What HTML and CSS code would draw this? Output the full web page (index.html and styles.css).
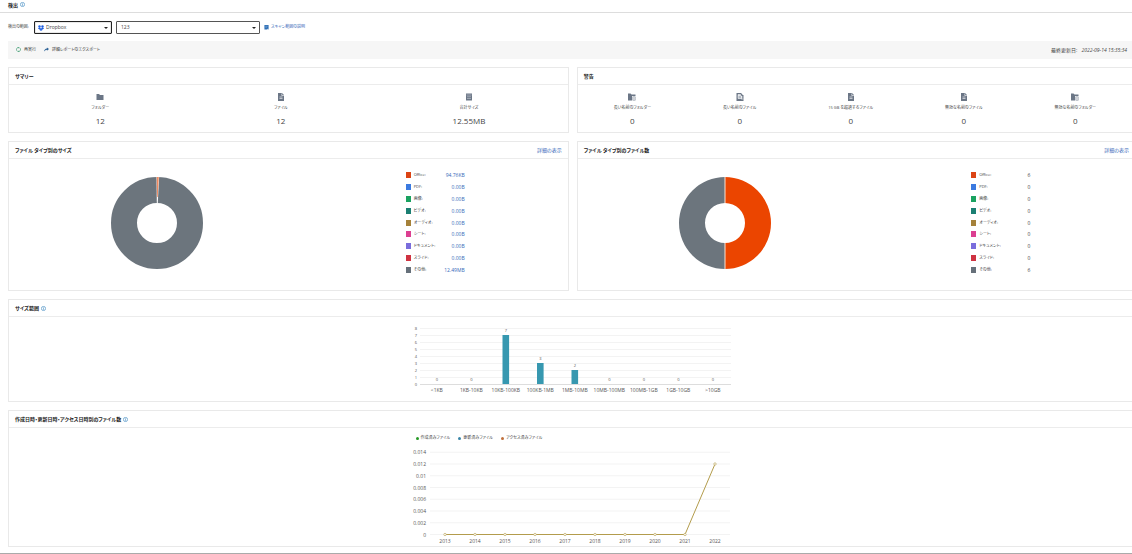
FILE: index.html
```html
<!DOCTYPE html>
<html lang="ja">
<head>
    <meta charset="UTF-8">
    <meta name="viewport" content="width=device-width, initial-scale=1.0">
    <title>検出</title>
    <link rel="stylesheet" href="styles.css">
</head>
<body>
    <!-- Shared icons -->
    <svg class="sprite" aria-hidden="true">
        <symbol id="icon-info" viewBox="0 0 10 10">
            <circle cx="5" cy="5" r="4.2" fill="none" stroke="#4a90c4" stroke-width="1.4"/>
            <path d="M5 4.3v3.2M5 2.4v1.1" stroke="#4a90c4" stroke-width="1.4"/>
        </symbol>
        <symbol id="icon-folder" viewBox="0 0 16 16">
            <path d="M1 2h5l2 2h7v10H1z" fill="#6b7686"/>
        </symbol>
        <symbol id="icon-file" viewBox="0 0 16 16">
            <path d="M2 0h8l4 4v12H2z" fill="#6b7686"/>
            <path d="M9.500 1v4H14M5 8h6M5 11h6" fill="none" stroke="#fff" stroke-width="1.200"/>
        </symbol>
        <symbol id="icon-long-file" viewBox="0 0 16 16">
            <path d="M1 0h9l3 3v1h2v12H1z" fill="#6b7686"/>
            <path d="M4 3h5v3h3v5H4zM10 12h5" fill="#dfe3e8" stroke="#fff"/>
            <path d="M5 8h5" stroke="#6b7686" stroke-width="1.500"/>
        </symbol>
        <symbol id="icon-long-folder" viewBox="0 0 16 16">
            <path d="M0 1h5l2 2h8v3H8v9H0z" fill="#6b7686"/>
            <path d="M9.500 7.500h5v7h-5zM11 10h2M11 12h2" fill="none" stroke="#6b7686"/>
        </symbol>
        <symbol id="icon-storage" viewBox="0 0 16 16">
            <path d="M2 1h12v14H2z" fill="#6b7686"/>
            <path d="M3 4h10M4 7.500h8M4 11h8" stroke="#d5dae0"/>
        </symbol>
    </svg>

    <header class="page-header">
        <h1>検出</h1>
        <svg class="icon-info"><use href="#icon-info"/></svg>
    </header>

    <main class="page">
        <form class="filters">
            <label for="source">検出の範囲:</label>
            <div class="select-wrap source">
                <svg class="dropbox" viewBox="0 0 12 11">
                    <path d="M3 0l3 2-3 2-3-2zM9 0l3 2-3 2-3-2zM3 4l3 2-3 2-3-2zM9 4l3 2-3 2-3-2zM6 7l3 2-3 2-3-2z" fill="#1f5fe0" stroke="#1f5fe0" stroke-width=".6"/>
                </svg>
                <select id="source"><option>Dropbox</option></select>
            </div>
            <div class="select-wrap scope">
                <select id="scope" aria-label="123"><option>123</option></select>
            </div>
            <a class="scope-link" href="#">
                <svg viewBox="0 0 12 12"><path d="M1 0h10v7l-4 4H1z" fill="#2f6fb5"/><path d="M3 3h6M3 5.500h4" stroke="#9cc4ea"/><path d="M8 9h4M10 7v4" stroke="#2f6fb5"/></svg>
                スキャン範囲の説明
            </a>
        </form>

        <div class="toolbar">
            <button type="button">
                <svg viewBox="0 0 12 12"><path d="M2 9A5 5 0 0 1 7 1.200M10 3A5 5 0 0 1 5 10.800" fill="none" stroke="#35986a" stroke-width="1.800"/><path d="M6 0l3 1.500L6.500 3.500zM6 12l-3-1.500 2.500-2z" fill="#35986a"/></svg>
                再実行
            </button>
            <button type="button">
                <svg viewBox="0 0 12 12"><path d="M7 1l5 4-5 4V6.500Q3 6.500 0 11 1 4 7 3.500z" fill="#2f6498"/></svg>
                詳細レポートのエクスポート
            </button>
            <p class="updated">最終更新日: <time>2022-09-14 15:35:34</time></p>
        </div>

        <div class="cards">
            <section class="card">
                <div class="card-header"><h2>サマリー</h2></div>
                <ul class="stats">
                    <li><svg><use href="#icon-folder"/></svg><span>フォルダー</span><strong>12</strong></li>
                    <li><svg><use href="#icon-file"/></svg><span>ファイル</span><strong>12</strong></li>
                    <li><svg><use href="#icon-storage"/></svg><span>合計サイズ</span><strong>12.55MB</strong></li>
                </ul>
            </section>

            <section class="card">
                <div class="card-header"><h2>警告</h2></div>
                <ul class="stats">
                    <li><svg><use href="#icon-long-folder"/></svg><span>長い名前のフォルダー</span><strong>0</strong></li>
                    <li><svg><use href="#icon-long-file"/></svg><span>長い名前のファイル</span><strong>0</strong></li>
                    <li><svg><use href="#icon-file"/></svg><span>15 GB を超過するファイル</span><strong>0</strong></li>
                    <li><svg><use href="#icon-file"/></svg><span>無効な名前のファイル</span><strong>0</strong></li>
                    <li><svg><use href="#icon-long-folder"/></svg><span>無効な名前のフォルダー</span><strong>0</strong></li>
                </ul>
            </section>

            <section class="card">
                <div class="card-header"><h2>ファイル タイプ別のサイズ</h2><a href="#">詳細の表示</a></div>
                <div class="breakdown">
                    <div class="donut">
                        <svg viewBox="0 0 92 92">
                            <circle cx="46" cy="46" r="33" fill="none" stroke="#6c757d" stroke-width="26"/>
                            <path d="M45.500 0h2.600L46.800 26h-1z" fill="#fff"/>
                            <path d="M45.800 0h2L46.700 20h-.7z" fill="#f08a60"/>
                        </svg>
                    </div>
                    <ul class="legend">
                        <li><i class="office"></i>Office:<a href="#">94.76KB</a></li>
                        <li><i class="pdf"></i>PDF:<a href="#">0.00B</a></li>
                        <li><i class="image"></i>画像:<a href="#">0.00B</a></li>
                        <li><i class="video"></i>ビデオ:<a href="#">0.00B</a></li>
                        <li><i class="audio"></i>オーディオ:<a href="#">0.00B</a></li>
                        <li><i class="sheet"></i>シート:<a href="#">0.00B</a></li>
                        <li><i class="document"></i>ドキュメント:<a href="#">0.00B</a></li>
                        <li><i class="slide"></i>スライド:<a href="#">0.00B</a></li>
                        <li><i class="other"></i>その他:<a href="#">12.49MB</a></li>
                    </ul>
                </div>
            </section>

            <section class="card">
                <div class="card-header"><h2>ファイル タイプ別のファイル数</h2><a href="#">詳細の表示</a></div>
                <div class="breakdown">
                    <div class="donut">
                        <svg viewBox="0 0 92 92">
                            <path d="M46 0a46 46 0 0 1 0 92V66a20 20 0 0 0 0-40z" fill="#eb4500"/>
                            <path d="M46 0a46 46 0 0 0 0 92V66a20 20 0 0 1 0-40z" fill="#6c757d"/>
                            <path d="M46 0v26M46 66v26" stroke="#fbe3d2"/>
                        </svg>
                    </div>
                    <ul class="legend">
                        <li><i class="office"></i>Office:<span>6</span></li>
                        <li><i class="pdf"></i>PDF:<span>0</span></li>
                        <li><i class="image"></i>画像:<span>0</span></li>
                        <li><i class="video"></i>ビデオ:<span>0</span></li>
                        <li><i class="audio"></i>オーディオ:<span>0</span></li>
                        <li><i class="sheet"></i>シート:<span>0</span></li>
                        <li><i class="document"></i>ドキュメント:<span>0</span></li>
                        <li><i class="slide"></i>スライド:<span>0</span></li>
                        <li><i class="other"></i>その他:<span>6</span></li>
                    </ul>
                </div>
            </section>

            <section class="card wide">
                <div class="card-header"><h2>サイズ範囲</h2><svg class="icon-info"><use href="#icon-info"/></svg></div>
                <svg class="chart" id="size-chart" viewBox="0 0 340 84"></svg>
            </section>

            <section class="card wide">
                <div class="card-header"><h2>作成日時・更新日時・アクセス日時別のファイル数</h2><svg class="icon-info"><use href="#icon-info"/></svg></div>
                <div class="chart-block">
                    <ul class="series">
                        <li class="created">作成済みファイル</li>
                        <li class="modified">更新済みファイル</li>
                        <li class="accessed">アクセス済みファイル</li>
                    </ul>
                    <svg class="chart" id="date-chart" viewBox="0 0 340 104"></svg>
                </div>
            </section>
        </div>
    </main>

    <script>
        (function() {
            function add(parent, name, attrs, text) {
                const el = document.createElementNS('http://www.w3.org/2000/svg', name);
                Object.keys(attrs).forEach(key => el.setAttribute(key, attrs[key]));
                if (text !== undefined) el.textContent = text;
                parent.appendChild(el);
            }

            // Files by size
            function drawSizeChart() {
                const svg = document.getElementById('size-chart');
                const labels = ['<1KB', '1KB-10KB', '10KB-100KB', '100KB-1MB', '1MB-10MB', '10MB-100MB', '100MB-1GB', '1GB-10GB', '>10GB'];
                const values = [0, 0, 7, 3, 2, 0, 0, 0, 0];
                const base = 67;

                for (let i = 0; i <= 8; i++) {
                    add(svg, 'line', { x1: 19, x2: 330, y1: base - i * 7 + .5, y2: base - i * 7 + .5, class: i ? 'grid' : 'axis' });
                    add(svg, 'text', { x: 16, y: base - i * 7 + 2, class: 'small end' }, i);
                }
                values.forEach((value, i) => {
                    const x = 35.8 + i * 34.5;
                    if (value) {
                        add(svg, 'rect', { x: x - 3.3, y: base - value * 7, width: 6.6, height: value * 7, class: 'bar' });
                    }
                    add(svg, 'text', { x: x, y: base - value * 7 - 3, class: 'small' }, value);
                    add(svg, 'text', { x: x, y: base + 8 }, labels[i]);
                });
            }

            // Files by date
            function drawDateChart() {
                const svg = document.getElementById('date-chart');
                const ticks = ['0', '0.002', '0.004', '0.006', '0.008', '0.01', '0.012', '0.014'];
                const values = [0, 0, 0, 0, 0, 0, 0, 0, 0, 0.012];
                const base = 92.5;
                const y = value => base - value / 0.002 * 11.75;

                ticks.forEach(tick => {
                    add(svg, 'line', { x1: 29, x2: 329, y1: y(tick), y2: y(tick), class: 'grid' });
                    add(svg, 'text', { x: 25, y: y(tick) + 2, class: 'end' }, tick);
                });
                const points = values.map((value, i) => [44 + i * 30, y(value)]);
                add(svg, 'polyline', { points: points.join(' '), class: 'line' });
                points.forEach((point, i) => {
                    add(svg, 'circle', { cx: point[0], cy: point[1], r: 1.2, class: 'point' });
                    add(svg, 'text', { x: point[0], y: 101 }, 2013 + i);
                });
            }

            drawSizeChart();
            drawDateChart();
        })();
    </script>
</body>
</html>
```
FILE: styles.css
```css
* {
    box-sizing: border-box;
}

body {
    margin: 0;
    background: #fff;
    color: #444;
    font-family: "Open Sans", "Noto Sans CJK JP", sans-serif;
    font-size: 5px;
    line-height: 8px;
    font-feature-settings: "palt";
    border-bottom: 1px solid #aaa;
}

h1,
h2,
p,
ul {
    margin: 0;
    padding: 0;
    list-style: none;
}

h1,
h2 {
    color: #222;
    font-size: 5px;
    font-weight: 700;
}

a {
    color: #3568b8;
    text-decoration: none;
}

.sprite {
    display: none;
}

.icon-info {
    width: 5px;
    height: 5px;
}

.page-header {
    display: flex;
    align-items: center;
    gap: 2px;
    height: 13px;
    padding: 0 8px 3px;
    border-bottom: 1px solid #ddd;
}

.page {
    padding: 7px 0 6px 8px;
}

/* Filters */
.filters {
    display: flex;
    align-items: center;
    height: 14px;
}

.filters label {
    width: 26px;
    font-size: 4px;
    white-space: nowrap;
}

.select-wrap {
    position: relative;
    height: 13px;
}

.select-wrap::after {
    content: "";
    position: absolute;
    right: 4px;
    top: 6px;
    border: 2px solid transparent;
    border-top-color: #222;
    border-bottom: 0;
}

.select-wrap select {
    display: block;
    width: 100%;
    height: 100%;
    padding: 0 4px;
    border: 1px solid #555;
    border-radius: 1px;
    background: #fff;
    color: #444;
    font: inherit;
    appearance: none;
}

.source {
    width: 78px;
    margin-right: 4px;
}

.source select {
    padding-left: 11px;
    border-color: #222;
    box-shadow: inset 0 0 1px #222;
}

.dropbox {
    position: absolute;
    left: 4px;
    top: 4px;
    width: 6px;
    height: 6px;
}

.scope {
    width: 144px;
    margin-right: 4px;
}

.scope-link {
    display: flex;
    align-items: center;
    gap: 2px;
    font-size: 4px;
}

.scope-link svg,
.toolbar button svg {
    width: 5px;
    height: 5px;
}

/* Toolbar */
.toolbar {
    display: flex;
    align-items: center;
    gap: 8px;
    height: 18px;
    margin-top: 7px;
    padding: 0 5px 1px 8px;
    background: #f6f6f6;
}

.toolbar button {
    display: flex;
    align-items: center;
    gap: 3px;
    padding: 0;
    border: 0;
    background: none;
    color: #333;
    font: inherit;
    font-size: 4px;
    font-feature-settings: inherit;
    cursor: pointer;
}

.updated {
    margin-left: auto;
}

.updated time {
    margin-left: 3px;
    font-style: italic;
}

/* Cards */
.cards {
    display: grid;
    grid-template-columns: 101fr 100fr;
    gap: 8px;
    margin-top: 8px;
}

.card {
    border: 1px solid #e9e9e9;
}

.card:nth-child(even),
.card.wide {
    border-right: 0;
}

.card.wide {
    grid-column: 1 / -1;
}

.card-header {
    display: flex;
    align-items: center;
    gap: 2px;
    height: 17px;
    padding: 0 6px;
    border-bottom: 1px solid #ececec;
}

.card-header a {
    margin-left: auto;
}

.card:nth-child(even) .card-header a {
    margin-right: -3px;
}

.stats {
    display: flex;
    justify-content: space-around;
    padding: 8px 0 5px;
}

.stats li {
    display: flex;
    flex-direction: column;
    align-items: center;
    font-size: 4px;
}

.stats svg {
    width: 8px;
    height: 8px;
}

.stats span {
    margin-top: 3px;
}

.stats strong {
    margin-top: 3px;
    font-size: 8px;
    font-weight: 400;
    line-height: 12px;
}

/* File type breakdown */
.breakdown {
    display: flex;
    align-items: center;
    padding: 12px 0 16px;
}

.donut {
    display: flex;
    justify-content: center;
    width: 53%;
}

.donut svg {
    width: 92px;
    height: 92px;
}

.legend {
    display: flex;
    flex-direction: column;
    justify-content: space-between;
    width: 59px;
    height: 103px;
    margin-left: 18%;
    font-size: 4px;
}

.legend li {
    display: flex;
    align-items: center;
}

.legend i {
    width: 5px;
    height: 6px;
    margin-right: 3px;
}

.legend a,
.legend span {
    margin-left: auto;
    font-size: 5px;
}

.office { background: #dc4414; }
.pdf { background: #3b7ae0; }
.image { background: #1aa260; }
.video { background: #1b7f72; }
.audio { background: #a5813a; }
.sheet { background: #dc3f91; }
.document { background: #7a6ddc; }
.slide { background: #cf3341; }
.other { background: #66707a; }

/* Charts */
.chart {
    display: block;
    width: 340px;
    margin: 0 auto;
}

.chart text {
    fill: #555;
    font-size: 5px;
    text-anchor: middle;
}

.chart text.small {
    font-size: 4px;
}

.chart text.end {
    text-anchor: end;
}

.grid {
    stroke: #f3f3f3;
}

.axis {
    stroke: #ddd;
}

.bar {
    fill: #3798b0;
}

.line {
    fill: none;
    stroke: #b39c4c;
}

.point {
    fill: #fff;
    stroke: #b39c4c;
    stroke-width: .6;
}

.chart-block {
    width: 340px;
    margin: 0 auto;
    padding-top: 6px;
}

.series {
    display: flex;
    gap: 8px;
    padding-left: 15px;
    font-size: 4px;
}

.series li {
    display: flex;
    align-items: center;
    gap: 2px;
}

.series li::before {
    content: "";
    width: 3px;
    height: 3px;
    border-radius: 50%;
    background: #279a27;
}

.series .modified::before {
    background: #3a86a8;
}

.series .accessed::before {
    background: #c0703c;
}
```
